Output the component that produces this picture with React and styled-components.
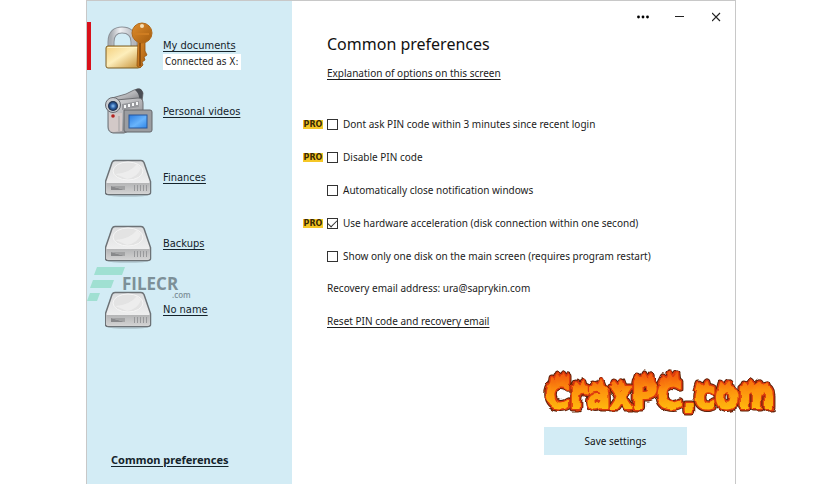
import React, { useState } from 'react';
import styled, { createGlobalStyle } from 'styled-components';

const disks = [
    { id: 'documents', name: 'My documents', icon: 'lock', status: 'Connected as X:' },
    { id: 'videos', name: 'Personal videos', icon: 'camera' },
    { id: 'finances', name: 'Finances', icon: 'drive' },
    { id: 'backups', name: 'Backups', icon: 'drive' },
    { id: 'noname', name: 'No name', icon: 'drive' },
];

const options = [
    { id: 'skipPin', pro: true, text: 'Dont ask PIN code within 3 minutes since recent login' },
    { id: 'disablePin', pro: true, text: 'Disable PIN code' },
    { id: 'closeNotices', pro: false, text: 'Automatically close notification windows' },
    { id: 'hardware', pro: true, text: 'Use hardware acceleration (disk connection within one second)' },
    { id: 'oneDisk', pro: false, text: 'Show only one disk on the main screen (requires program restart)' },
];

const LockIcon = () => (
    <svg width="48" height="48" viewBox="0 0 48 48" aria-hidden="true">
        <defs>
            <linearGradient id="lockBody" x1="0" y1="0" x2="1" y2="1">
                <stop offset="0" stopColor="#f3cf7c" />
                <stop offset="0.45" stopColor="#fdeebb" />
                <stop offset="1" stopColor="#c58f35" />
            </linearGradient>
            <linearGradient id="keyBody" x1="0" y1="0" x2="1" y2="1">
                <stop offset="0" stopColor="#e08d2d" />
                <stop offset="1" stopColor="#a55c0e" />
            </linearGradient>
            <linearGradient id="shackle" x1="0" y1="0" x2="1" y2="0">
                <stop offset="0" stopColor="#a9adb2" />
                <stop offset="0.4" stopColor="#f0f1f4" />
                <stop offset="1" stopColor="#b3b6bd" />
            </linearGradient>
        </defs>
        <path d="M6 27V20C6 11 11 8 17 8s12 3 12 12v7" fill="none" stroke="#8b9198" strokeWidth="7" />
        <path d="M6 27V20C6 11 11 8 17 8s12 3 12 12v7" fill="none" stroke="url(#shackle)" strokeWidth="5" />
        <rect x="1" y="24" width="34" height="22" rx="2" fill="url(#lockBody)" stroke="#7b5c22" />
        <path d="M2.500 25.500h31" stroke="#fff3c4" />
        <path d="M33 19l-1 25 3 2 3-3-1-3 3-2-1-3 3-2-2-4V19z" fill="url(#keyBody)" stroke="#96530e" strokeWidth="0.800" />
        <circle cx="37" cy="11" r="10" fill="url(#keyBody)" stroke="#b06a1b" />
        <circle cx="37" cy="4" r="2" fill="#f6dfb8" />
        <path d="M30 12h14" stroke="#cf7d22" strokeWidth="2" fill="none" />
        <path d="M35 21v23" stroke="#7e430a" strokeWidth="1.500" />
    </svg>
);

const CameraIcon = () => (
    <svg width="48" height="48" viewBox="0 0 48 48" aria-hidden="true">
        <defs>
            <linearGradient id="camBody" x1="0" y1="0" x2="1" y2="1">
                <stop offset="0" stopColor="#dcdddf" />
                <stop offset="0.5" stopColor="#b5b5b8" />
                <stop offset="1" stopColor="#77787c" />
            </linearGradient>
            <linearGradient id="camScreen" x1="0" y1="0" x2="1" y2="1">
                <stop offset="0" stopColor="#2b7ce0" />
                <stop offset="0.55" stopColor="#69b4fb" />
                <stop offset="1" stopColor="#2f86e8" />
            </linearGradient>
            <radialGradient id="camLens">
                <stop offset="0" stopColor="#8fc3f4" />
                <stop offset="0.5" stopColor="#2d62a8" />
                <stop offset="1" stopColor="#17233c" />
            </radialGradient>
        </defs>
        <path d="M7 10l14-4 8-4q7-3 9 3l-1 9H12z" fill="url(#camBody)" stroke="#77797d" />
        <path d="M30 2q6-4 8 3l-1 6-3-1q0-5-4-8z" fill="#4b4e54" />
        <path d="M3 18q0-5 8-6l22-2q5 0 5 5v22L19 45H8q-5-1-5-6z" fill="url(#camBody)" stroke="#6d6e72" />
        <path d="M4 26v13q0 5 5 5l8-1V25z" fill="#d3c9c8" />
        <path d="M17 16l17-3v6l-17 3z" fill="#98999d" />
        <path d="M19 18.500h2m2-1h2m2-1h2m2-1h2" stroke="#f6f7f8" strokeWidth="3" />
        <path d="M19 22h26q2 0 2 2v18q0 2-2 2H21q-2 0-2-2z" fill="#9b9da1" stroke="#65676b" />
        <rect x="24" y="27" width="18" height="13" fill="url(#camScreen)" stroke="#27579b" />
        <circle cx="8" cy="17" r="7.500" fill="#c9ccd0" stroke="#696b70" />
        <circle cx="8" cy="18" r="5" fill="url(#camLens)" />
        <circle cx="8" cy="28" r="1.800" fill="#b3221f" />
        <path d="M14 28v15" stroke="#a3a1a3" />
    </svg>
);

const DriveIcon = () => (
    <svg width="48" height="48" viewBox="0 0 48 48" aria-hidden="true">
        <defs>
            <linearGradient id="driveTop" x1="0" y1="0" x2="0" y2="1">
                <stop offset="0" stopColor="#dcddde" />
                <stop offset="1" stopColor="#f7f7f7" />
            </linearGradient>
            <linearGradient id="driveFront" x1="0" y1="0" x2="0" y2="1">
                <stop offset="0" stopColor="#b4b5b6" />
                <stop offset="1" stopColor="#d2d2d2" />
            </linearGradient>
        </defs>
        <ellipse cx="23" cy="41" rx="20" ry="2" fill="#8fa3aa" opacity="0.4" />
        <path d="M10 6.500h26q2 0 3 2l6.500 19v11q0 2-3 2h-39q-3 0-3-2v-11L7 8.500q1-2 3-2z" fill="url(#driveTop)" stroke="#6c7276" strokeWidth="1.500" />
        <path d="M1.200 29h43.600v8.500q0 2-2 2H3.200q-2 0-2-2z" fill="url(#driveFront)" />
        <ellipse cx="23" cy="17" rx="15" ry="9" fill="#e3e3e3" stroke="#f5f5f5" />
        <path d="M10 20q15-1 22-10l4 4q-3 9-14 11" fill="#efefef" opacity="0.8" />
        <path d="M6 32v4h14z" fill="#88898b" />
        <path d="M6 32h14v4z" fill="#a2a3a4" />
        <path d="M29.500 31v6m3-6v6m3-6v6m3-6v6m3-6v6" stroke="#98999b" />
    </svg>
);

const icons = { lock: LockIcon, camera: CameraIcon, drive: DriveIcon };

const FlameLogo = () => (
    <svg width="236" height="52" viewBox="0 0 236 52" role="img" aria-label="CraxPC.com">
        <defs>
            <linearGradient id="fire" x1="0" y1="8" x2="0" y2="44" gradientUnits="userSpaceOnUse">
                <stop offset="0" stopColor="#f4600c" />
                <stop offset="0.4" stopColor="#fd9208" />
                <stop offset="1" stopColor="#ffbe10" />
            </linearGradient>
            <filter id="rough" x="-5%" y="-20%" width="110%" height="140%">
                <feTurbulence type="fractalNoise" baseFrequency="0.12" numOctaves="1" seed="4" result="noise" />
                <feDisplacementMap in="SourceGraphic" in2="noise" scale="5" xChannelSelector="R" yChannelSelector="G" />
            </filter>
            <g id="flameWord" fontFamily="'DejaVu Sans Condensed', 'DejaVu Sans', sans-serif" fontSize="38" fontWeight="700">
                <path d="M9 16l1-6 3 3 2-6 3 4 3-5 3 5 3-4v8zM32 21l2-6 3 3 4-4 2 7zM50 21l2-6 4 3 3-5 3 8zM70 21l2-7 4 5 4-6 3 8zM93 15l2-7 4 4 3-6 3 5 4-4 2 9zM118 15l3-6 4 3 3-6 3 5 4-5 1 9zM155 22l2-6 4 3 4-5 2 8zM177 22l2-7 4 4 4-5 2 8zM200 22l2-6 4 3 3-5 4 4 5-4 3 4 4-2 1 7z" />
                <text x="3" y="40">CraxPC<tspan dy="3">.</tspan><tspan dy="-3">com</tspan></text>
            </g>
        </defs>
        <g filter="url(#rough)" strokeLinejoin="round">
            <use href="#flameWord" fill="#5a2108" stroke="#5a2108" strokeWidth="7" />
            <use href="#flameWord" fill="#dd3a08" stroke="#dd3a08" strokeWidth="5" />
            <use href="#flameWord" fill="url(#fire)" stroke="url(#fire)" strokeWidth="2" />
        </g>
    </svg>
);

const FileLogo = () => (
    <svg width="108" height="38" viewBox="0 0 108 38" role="img" aria-label="FILECR.com">
        <path d="M10 2h28l-3 8H7zM6 15h21l-3 8H3zM3 28h10l-3 8H0z" fill="#8fdcc6" opacity="0.75" />
        <text y="25" fill="#7d9098" fontFamily="'Open Sans', sans-serif" fontWeight="700" fontSize="17">
            <tspan x="35">FILECR</tspan>
            <tspan x="85" y="33" fontSize="8" fontWeight="600">.com</tspan>
        </text>
    </svg>
);

const App = () => {
    const [checked, setChecked] = useState({ hardware: true });

    const handleChange = (e) => {
        setChecked({
            ...checked, [e.target.id]: e.target.checked
        });
    }

    return (
        <Page>
            <GlobalStyle />
            <Window>
                <Sidebar>
                    <DiskList>
                        {disks.map((disk, index) => {
                            const Icon = icons[disk.icon];
                            return (
                                <DiskItem key={disk.id} $active={index === 0}>
                                    <Icon />
                                    <DiskText>
                                        <DiskLink href={`#${disk.id}`}>{disk.name}</DiskLink>
                                        {disk.status && <DiskStatus>{disk.status}</DiskStatus>}
                                    </DiskText>
                                </DiskItem>
                            );
                        })}
                    </DiskList>
                    <PreferencesLink href="#preferences">Common preferences</PreferencesLink>
                    <FileMark><FileLogo /></FileMark>
                </Sidebar>
                <Main>
                    <TitleBar>
                        <TitleButton aria-label="Menu">
                            <svg width="12" height="12" viewBox="0 0 12 12">
                                <circle cx="1.500" cy="6" r="1.400" /><circle cx="6" cy="6" r="1.400" /><circle cx="10.500" cy="6" r="1.400" />
                            </svg>
                        </TitleButton>
                        <TitleButton aria-label="Minimize">
                            <svg width="10" height="10" viewBox="0 0 10 10"><path d="M0 4.500h9" stroke="#222" /></svg>
                        </TitleButton>
                        <TitleButton aria-label="Close">
                            <svg width="10" height="10" viewBox="0 0 10 10"><path d="M0 1l8 8M8 1l-8 8" stroke="#222" strokeWidth="1.200" /></svg>
                        </TitleButton>
                    </TitleBar>
                    <Heading>Common preferences</Heading>
                    <TextLink href="#explanation">Explanation of options on this screen</TextLink>
                    <OptionList>
                        {options.map((option) => (
                            <Option key={option.id}>
                                {option.pro ? <ProBadge>PRO</ProBadge> : <span />}
                                <CheckBox
                                    id={option.id}
                                    type="checkbox"
                                    checked={!!checked[option.id]}
                                    onChange={handleChange}
                                />
                                <label htmlFor={option.id}>{option.text}</label>
                            </Option>
                        ))}
                    </OptionList>
                    <Recovery>Recovery email address: ura@saprykin.com</Recovery>
                    <TextLink href="#reset">Reset PIN code and recovery email</TextLink>
                    <SaveButton type="button">Save settings</SaveButton>
                    <FlameMark><FlameLogo /></FlameMark>
                </Main>
            </Window>
        </Page>
    );
}


export default App;

const GlobalStyle = createGlobalStyle`
  * {
    box-sizing: border-box;
  }
  body {
    margin: 0;
    background-color: #fff;
    color: #1c1c1c;
    font-family: 'Noto Sans', 'Open Sans', sans-serif;
    font-size: 10px;
    line-height: 16px;
  }
`;

const Page = styled.div`
  display: flex;
  min-height: 100vh;
  padding: 0 100px 0 86px;
`;

const Window = styled.div`
  flex: 1;
  display: flex;
  border: 1px solid #c8c8c8;
  border-bottom: none;
`;

const Sidebar = styled.nav`
  position: relative;
  display: flex;
  flex-direction: column;
  justify-content: space-between;
  flex: 0 0 205px;
  padding: 21px 0 16px;
  background-color: #d3ecf5;
  font-family: 'DejaVu Sans Condensed', 'DejaVu Sans', sans-serif;
`;

const DiskList = styled.ul`
  display: flex;
  flex-direction: column;
  gap: 18px;
  margin: 0;
  padding: 0;
  list-style: none;
`;

const DiskItem = styled.li`
  display: flex;
  gap: 10px;
  height: 48px;
  padding-left: 14px;
  border-left: 4px solid ${(props) => (props.$active ? '#d9101a' : 'transparent')};
`;

const DiskText = styled.div`
  display: flex;
  flex-direction: column;
  align-items: flex-start;
  padding-top: 16px;
`;

const DiskLink = styled.a`
  color: #14232b;
  font-size: 11px;
  text-underline-offset: 2px;
`;

const DiskStatus = styled.span`
  padding: 0 2px;
  background-color: #fff;
`;

const PreferencesLink = styled.a`
  padding-left: 24px;
  color: #14232b;
  font-family: 'Noto Sans', 'Open Sans', sans-serif;
  font-size: 11px;
  font-weight: 700;
  text-underline-offset: 2px;
`;

const FileMark = styled.div`
  position: absolute;
  top: 264px;
  left: 0;
  pointer-events: none;
`;

const Main = styled.main`
  position: relative;
  flex: 1;
  display: flex;
  flex-direction: column;
  align-items: flex-start;
  padding: 0 0 29px 35px;
`;

const TitleBar = styled.div`
  display: flex;
  align-self: flex-end;
`;

const TitleButton = styled.button`
  display: flex;
  align-items: center;
  justify-content: center;
  width: 37px;
  height: 32px;
  padding: 0;
  border: none;
  background: none;
`;

const Heading = styled.h1`
  margin: 0 0 10px;
  color: #111;
  font-size: 16px;
  font-weight: 400;
  line-height: 22px;
`;

const TextLink = styled.a`
  color: #1c1c1c;
  text-underline-offset: 2px;
`;

const OptionList = styled.div`
  display: flex;
  flex-direction: column;
  gap: 17px;
  margin: 35px 0 16px -24px;
`;

const Option = styled.div`
  display: grid;
  grid-template-columns: 20px 12px auto;
  align-items: center;
  column-gap: 4px;
`;

const ProBadge = styled.span`
  background-color: #f5c726;
  color: #3a2a05;
  font-family: 'DejaVu Sans', sans-serif;
  font-size: 8px;
  font-weight: 700;
  line-height: 9px;
  text-align: center;
`;

const CheckBox = styled.input`
  appearance: none;
  display: grid;
  place-items: center;
  width: 11px;
  height: 11px;
  margin: 0;
  border: 1px solid #333;
  background-color: #fff;

  &:checked::before {
    content: '';
    width: 8px;
    height: 4px;
    margin-bottom: 2px;
    border: solid #333;
    border-width: 0 0 1px 1px;
    transform: rotate(-45deg);
  }
`;

const Recovery = styled.p`
  margin: 0 0 17px;
`;

const SaveButton = styled.button`
  align-self: flex-end;
  width: 143px;
  height: 28px;
  margin: auto 48px 0 0;
  border: none;
  background-color: #d3ecf5;
  color: #111;
  font: inherit;
`;

const FlameMark = styled.div`
  position: absolute;
  right: -43px;
  bottom: 60px;
  pointer-events: none;
`;
